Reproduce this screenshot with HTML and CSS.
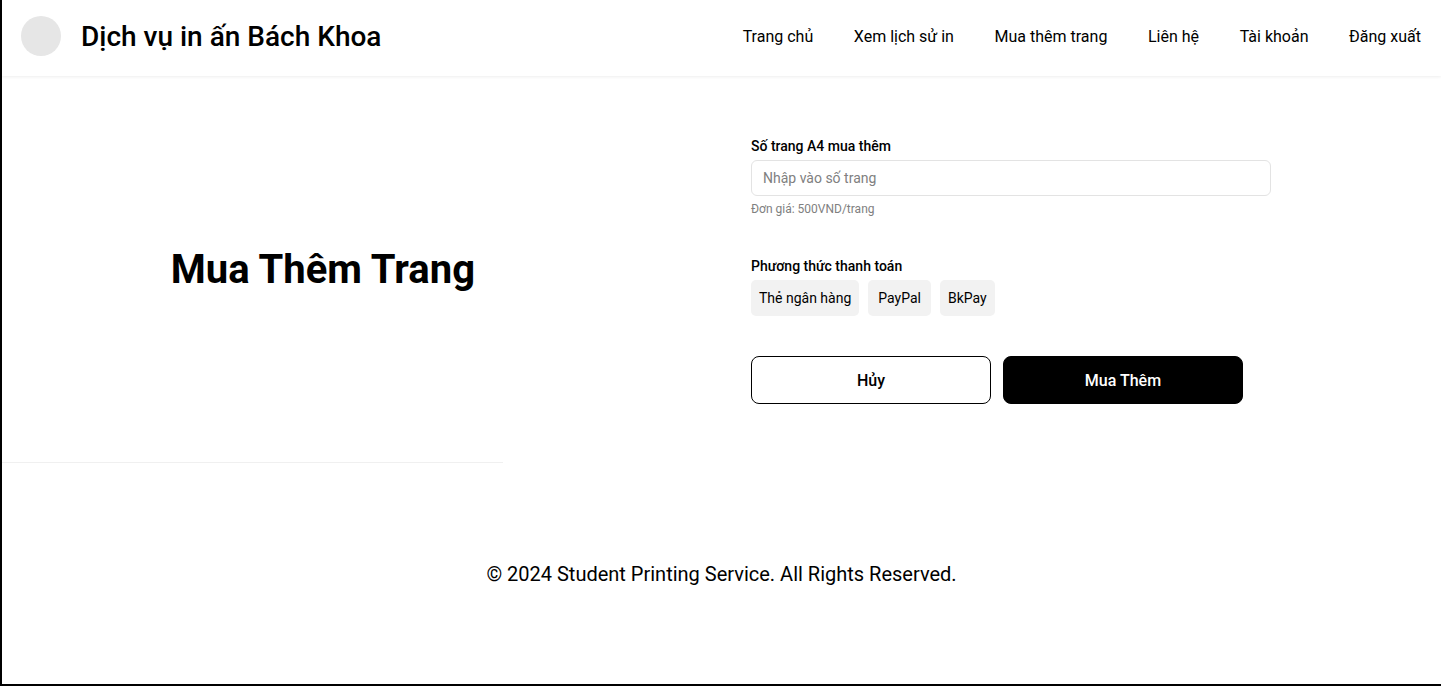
FILE: index.html
```html
<!DOCTYPE html>
<html lang="vi">
<head>
<meta charset="utf-8">
<title>Mua Thêm Trang</title>
<link rel="stylesheet" href="styles.css">
</head>
<body>
<div class="page">
  <header class="header">
    <div class="brand">
      <div class="logo"></div>
      <span class="brand-name">Dịch vụ in ấn Bách Khoa</span>
    </div>
    <nav class="nav">
      <a href="#">Trang chủ</a>
      <a href="#">Xem lịch sử in</a>
      <a href="#">Mua thêm trang</a>
      <a href="#">Liên hệ</a>
      <a href="#">Tài khoản</a>
      <a href="#">Đăng xuất</a>
    </nav>
  </header>
  <main class="main">
    <section class="intro">
      <h1 class="title">Mua Thêm Trang</h1>
    </section>
    <section class="form">
      <div class="field">
        <label class="label">Số trang A4 mua thêm</label>
        <input class="input" type="text" placeholder="Nhập vào số trang">
        <span class="hint">Đơn giá: 500VND/trang</span>
      </div>
      <div class="field pay">
        <label class="label">Phương thức thanh toán</label>
        <div class="chips">
          <span class="chip">Thẻ ngân hàng</span>
          <span class="chip chip-wide">PayPal</span>
          <span class="chip">BkPay</span>
        </div>
      </div>
      <div class="actions">
        <button class="btn btn-outline">Hủy</button>
        <button class="btn btn-solid">Mua Thêm</button>
      </div>
    </section>
  </main>
  <footer class="footer">© 2024 Student Printing Service. All Rights Reserved.</footer>
</div>
</body>
</html>
```
FILE: styles.css
```css
* { box-sizing: border-box; }
html, body { margin: 0; padding: 0; }
body {
  font-family: Roboto, "Noto Sans", Arial, sans-serif;
  color: #000;
  background: #fff;
}
.page {
  height: 686px;
  border-left: 2px solid #000;
  border-bottom: 2px solid #000;
  display: flex;
  flex-direction: column;
}
.header {
  height: 76px;
  flex: none;
  display: flex;
  align-items: center;
  justify-content: space-between;
  padding: 0 20px 4px 19px;
  box-shadow: 0 1px 3px rgba(0,0,0,0.07);
  position: relative;
  z-index: 1;
}
.brand { display: flex; align-items: center; gap: 20px; }
.logo {
  width: 40px; height: 40px; border-radius: 50%;
  background: #e6e6e6;
}
.brand-name { font-size: 28px; font-weight: 500; }
.nav { display: flex; gap: 40.6px; }
.nav a { color: #000; text-decoration: none; font-size: 16px; }
.main {
  height: 387px;
  flex: none;
  display: flex;
  align-items: center;
}
.intro {
  width: 501px;
  height: 100%;
  display: flex;
  align-items: center;
  justify-content: flex-end;
  padding-right: 28px;
  border-bottom: 1px solid #f0f0f0;
}
.title { margin: 0; font-size: 40px; font-weight: 700; }
.form {
  margin-left: 248px;
  width: 520px;
  padding-top: 3px;
  display: flex;
  flex-direction: column;
}
.field { display: flex; flex-direction: column; }
.label { font-size: 14px; font-weight: 500; margin-bottom: 6px; }
.input {
  height: 36px;
  border: 1px solid #e3e3e3;
  border-radius: 6px;
  padding: 0 11px;
  font-family: inherit;
  font-size: 14px;
  outline: none;
}
.input::placeholder { color: #808080; }
.hint { font-size: 12px; color: #808080; margin-top: 6px; }
.pay { margin-top: 42px; }
.chips { display: flex; gap: 9px; }
.chip {
  height: 36px;
  display: flex;
  align-items: center;
  padding: 0 8px;
  background: #f2f2f2;
  border-radius: 5px;
  font-size: 14px;
}
.chip-wide { padding: 0 10px; }
.actions { display: flex; gap: 12px; margin-top: 40px; }
.btn {
  width: 240px; height: 48px;
  border-radius: 8px;
  font-family: inherit;
  font-size: 16px;
  font-weight: 500;
  cursor: pointer;
}
.btn-outline { background: #fff; border: 1px solid #000; color: #000; }
.btn-solid { background: #000; border: 1px solid #000; color: #fff; }
.footer {
  flex: 1;
  display: flex;
  align-items: center;
  justify-content: center;
  font-size: 20px;
}
```
